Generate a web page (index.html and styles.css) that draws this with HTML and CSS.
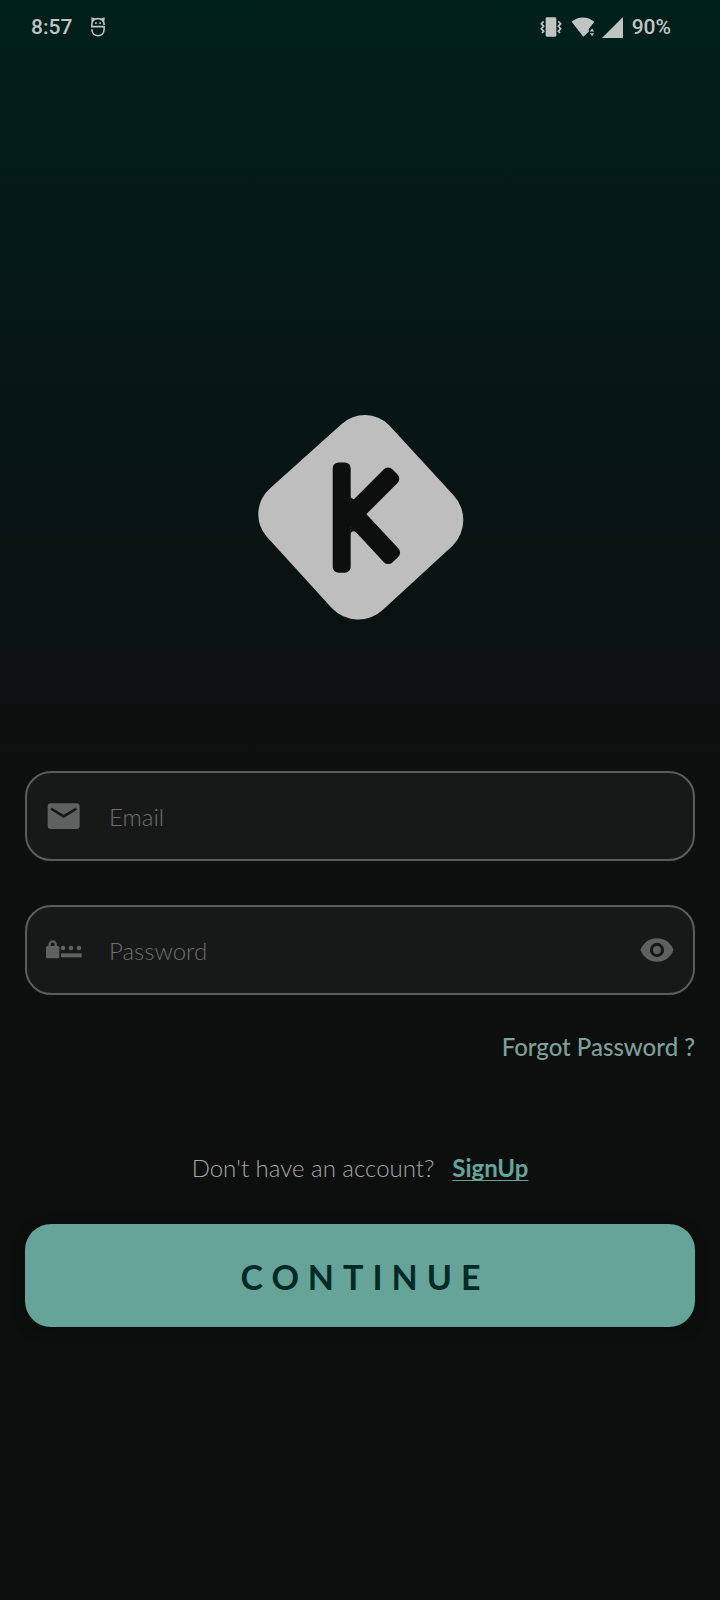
FILE: index.html
```
<!DOCTYPE html>
<html lang="en">
<head>
<meta charset="utf-8">
<meta name="viewport" content="width=device-width, initial-scale=1">
<title>Sign in</title>
<link rel="stylesheet" href="styles.css">
</head>
<body>
<div class="screen">
  <header class="status">
    <div class="status-group status-left">
      <span>8:57</span>
      <svg class="mascot" viewBox="0 0 48 62" fill="none" stroke="currentColor" stroke-width="5" aria-hidden="true">
        <path d="M43 25C43 12 36 5 24 5S5 12 5 22v8h38v8c0 12-8 20-19 20S5 50 5 38M6 12V4l8 3M42 12V4l-8 3"/>
        <path d="M15 19h5M28 19h5"/>
      </svg>
    </div>
    <div class="status-group">
      <svg class="vibrate" viewBox="0 0 66 60" aria-hidden="true">
        <rect x="17" y="1" width="32" height="58" rx="4" fill="currentColor"/>
        <path d="M11 13l-7 7 7 8-7 7 7 8-5 5M55 13l7 7-7 8 7 7-7 8 5 5" fill="none" stroke="currentColor" stroke-width="5"/>
      </svg>
      <svg class="wifi" viewBox="0 0 72 62" fill="currentColor" aria-hidden="true">
        <path d="M1 15C20-3 51-3 71 15L54 37v9L37 61z"/>
        <path d="M57 45l7-9 7 9zM57 50l7 9 7-9z"/>
      </svg>
      <svg class="signal" viewBox="0 0 64 64" fill="currentColor" aria-hidden="true"><path d="M64 0v64H0z"/></svg>
      <span class="battery">90%</span>
    </div>
  </header>
  <main class="login">
    <svg class="logo" viewBox="51 42 624 622" role="img" aria-label="K">
      <path class="logo-tile" d="M305 72A103 103 0 0 1 447 75L641 286A109 109 0 0 1 639 437L429 630A109 109 0 0 1 275 625L80 411A103 103 0 0 1 90 265Z"/>
      <g class="logo-mark">
        <rect x="278" y="188" width="54" height="331" rx="17"/>
        <rect y="-29" width="210" height="58" rx="18" transform="translate(465 216) rotate(135)"/>
        <rect y="-30" width="210" height="60" rx="18" transform="translate(466 480) rotate(227)"/>
        <path d="M331 288Q334 298 341 298Q346 297 350 293L340 318H331ZM331 404Q334 394 341 394Q346 394 350 399L340 370H331Z"/>
      </g>
    </svg>
    <form class="form">
      <div class="field">
        <svg class="field-icon" viewBox="0 0 108 108" aria-hidden="true">
          <rect x="5" y="16" width="96" height="77" rx="9" fill="currentColor"/>
          <path class="cut" d="M15 32l38 23 38-23"/>
        </svg>
        <input type="email" placeholder="Email" aria-label="Email">
      </div>
      <div class="field">
        <svg class="field-icon" viewBox="0 0 108 108" fill="currentColor" aria-hidden="true">
          <rect y="42" width="40" height="37" rx="5"/>
          <path d="M11 43v-6a9 9 0 0 1 18 0v6" fill="none" stroke="currentColor" stroke-width="7"/>
          <circle cx="51" cy="48" r="7"/><circle cx="75" cy="48" r="7"/><circle cx="99" cy="48" r="7"/>
          <rect x="45" y="64" width="62" height="12"/>
        </svg>
        <input type="password" placeholder="Password" aria-label="Password">
        <button class="reveal" type="button" aria-label="Show password">
          <svg viewBox="0 0 104 74" aria-hidden="true">
            <path d="M1 37C10 14 29 1 52 1s42 13 51 36C94 60 75 73 52 73S10 60 1 37z" fill="currentColor"/>
            <circle class="cut pupil" cx="52" cy="37" r="17"/>
          </svg>
        </button>
      </div>
      <a class="forgot" href="#">Forgot Password ?</a>
      <p class="signup"><span>Don't have an account?</span><a href="#">SignUp</a></p>
      <button class="continue" type="submit">CONTINUE</button>
    </form>
  </main>
</div>
</body>
</html>
```
FILE: styles.css
```
* { box-sizing: border-box; }
body {
  margin: 0;
  background: #0c0f0e;
  color: #a5a7a6;
  font-family: Lato, "Open Sans", sans-serif;
  font-size: 24px;
}
.screen {
  min-height: 100vh;
  background: linear-gradient(#00201c 0, #041a18 200px, #081514 480px, #0c0f0e 780px);
}
.status {
  display: flex;
  justify-content: space-between;
  align-items: center;
  height: 54px;
  padding: 0 49px 0 31px;
  color: #c0c5c4;
  font: 500 21px/24px Roboto, sans-serif;
}
.status-group { display: flex; align-items: center; gap: 9px; }
.status-left { gap: 18px; }
.mascot { width: 16px; height: 20px; }
.vibrate { width: 22px; height: 20px; }
.wifi { width: 24px; height: 20px; }
.signal { width: 21px; height: 21px; margin-left: -2px; }
.login { padding: 360px 25px 48px; }
.logo { display: block; width: 208px; height: 207px; margin: 0 auto 150px; transform: translateX(1px); }
.logo-tile { fill: #bebebe; }
.logo-mark { fill: #0d0f0e; }
.form { display: flex; flex-direction: column; }
.field {
  display: flex;
  align-items: center;
  height: 90px;
  padding: 0 19px;
  margin-bottom: 44px;
  border: 2px solid #5b5d5c;
  border-radius: 26px;
  background: #171918;
  color: #5f6160;
}
.field-icon { flex: none; width: 36px; height: 36px; margin-right: 27px; }
.cut { fill: none; stroke: #171918; stroke-width: 8; }
.pupil { stroke-width: 10; }
.field input {
  flex: 1;
  min-width: 0;
  height: 100%;
  padding: 0;
  border: 0;
  outline: 0;
  background: none;
  color: #a5a7a6;
  font: 300 24px/32px Lato, sans-serif;
}
.field input::placeholder { color: #6c6e6d; opacity: 1; }
.reveal { padding: 0; border: 0; background: none; color: inherit; }
.reveal svg { display: block; width: 34px; height: 24px; }
.forgot {
  align-self: flex-end;
  margin-top: -8px;
  color: #7f9f98;
  font-weight: 500;
  line-height: 32px;
  text-decoration: none;
}
.signup {
  display: flex;
  justify-content: center;
  gap: 18px;
  margin: 89px 0 40px;
  line-height: 32px;
  font-weight: 300;
}
.signup a {
  color: #66a399;
  font-weight: 700;
  text-underline-offset: 3px;
  text-decoration-thickness: 1px;
  text-decoration-skip-ink: none;
}
.continue {
  height: 103px;
  padding: 2px 0 0 10px;
  border: 0;
  border-radius: 26px;
  background: #66a399;
  box-shadow: 0 4px 12px #0a0c0b;
  color: #002a26;
  font: 700 34px/40px Lato, sans-serif;
  letter-spacing: 9px;
}
```
